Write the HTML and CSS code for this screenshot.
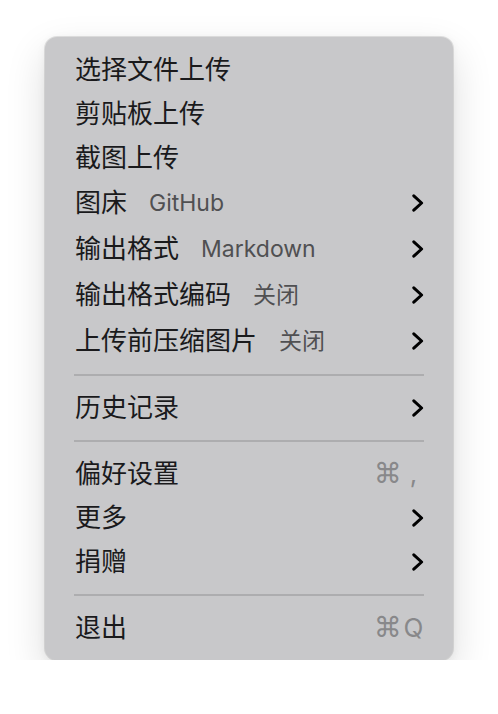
FILE: index.html
```html
<!DOCTYPE html>
<html lang="zh-CN">
<head>
<meta charset="utf-8">
<title>Menu</title>
<link rel="stylesheet" href="styles.css">
</head>
<body>
<div class="menu">
  <div class="item"><span class="label">选择文件上传</span></div>
  <div class="item"><span class="label">剪贴板上传</span></div>
  <div class="item"><span class="label">截图上传</span></div>
  <div class="item item-detail"><span class="label">图床</span><span class="detail">GitHub</span><span class="spacer"></span><svg class="chev" viewBox="0 0 12 18" width="12" height="18"><path d="M1.8 1.8 L9.6 9 L1.8 16.2"/></svg></div>
  <div class="item item-detail"><span class="label">输出格式</span><span class="detail">Markdown</span><span class="spacer"></span><svg class="chev" viewBox="0 0 12 18" width="12" height="18"><path d="M1.8 1.8 L9.6 9 L1.8 16.2"/></svg></div>
  <div class="item item-detail"><span class="label">输出格式编码</span><span class="detail">关闭</span><span class="spacer"></span><svg class="chev" viewBox="0 0 12 18" width="12" height="18"><path d="M1.8 1.8 L9.6 9 L1.8 16.2"/></svg></div>
  <div class="item item-detail"><span class="label">上传前压缩图片</span><span class="detail">关闭</span><span class="spacer"></span><svg class="chev" viewBox="0 0 12 18" width="12" height="18"><path d="M1.8 1.8 L9.6 9 L1.8 16.2"/></svg></div>
  <div class="sep"></div>
  <div class="item"><span class="label">历史记录</span><span class="spacer"></span><svg class="chev" viewBox="0 0 12 18" width="12" height="18"><path d="M1.8 1.8 L9.6 9 L1.8 16.2"/></svg></div>
  <div class="sep"></div>
  <div class="item"><span class="label">偏好设置</span><span class="spacer"></span><span class="shortcut"><span class="cmd">⌘</span><span class="key">,</span></span></div>
  <div class="item"><span class="label">更多</span><span class="spacer"></span><svg class="chev" viewBox="0 0 12 18" width="12" height="18"><path d="M1.8 1.8 L9.6 9 L1.8 16.2"/></svg></div>
  <div class="item"><span class="label">捐赠</span><span class="spacer"></span><svg class="chev" viewBox="0 0 12 18" width="12" height="18"><path d="M1.8 1.8 L9.6 9 L1.8 16.2"/></svg></div>
  <div class="sep"></div>
  <div class="item"><span class="label">退出</span><span class="spacer"></span><span class="shortcut"><span class="cmd">⌘</span><span class="key">Q</span></span></div>
</div>
</body>
</html>
```
FILE: styles.css
```css
html, body {
  margin: 0;
  padding: 0;
  background: #ffffff;
}
body {
  padding: 37px 0 0 45px;
  font-family: Inter, "Noto Sans CJK SC", sans-serif;
}
.menu {
  width: 408px;
  height: 623px;
  box-sizing: border-box;
  padding: 11px 29px 10px 30px;
  background: #c8c8ca;
  border-radius: 12px;
  box-shadow: 0 0 0 1px rgba(0, 0, 0, 0.1), 0 16px 40px rgba(0, 0, 0, 0.14), 0 2px 10px rgba(0, 0, 0, 0.06);
  display: flex;
  flex-direction: column;
}
.item {
  height: 44px;
  display: flex;
  align-items: center;
  color: #1a1a1c;
  font-size: 26px;
  line-height: 1;
}
.item-detail {
  height: 46px;
}
.label {
  white-space: nowrap;
}
.detail {
  margin-left: 22px;
  font-size: 23px;
  color: #505052;
  white-space: nowrap;
}
.spacer {
  flex: 1;
}
.chev {
  display: block;
}
.chev path {
  fill: none;
  stroke: #000;
  stroke-width: 3;
  stroke-linecap: round;
  stroke-linejoin: round;
}
.sep {
  height: 2px;
  margin: 10px 0 10px -1px;
  background: #adadaf;
}
.shortcut {
  display: flex;
  align-items: center;
  color: #88888a;
  font-family: "DejaVu Sans", sans-serif;
}
.cmd {
  font-size: 28px;
}
.key {
  width: 21px;
  margin-left: 1px;
  text-align: center;
  font-family: Inter, sans-serif;
  font-size: 26px;
}
```
